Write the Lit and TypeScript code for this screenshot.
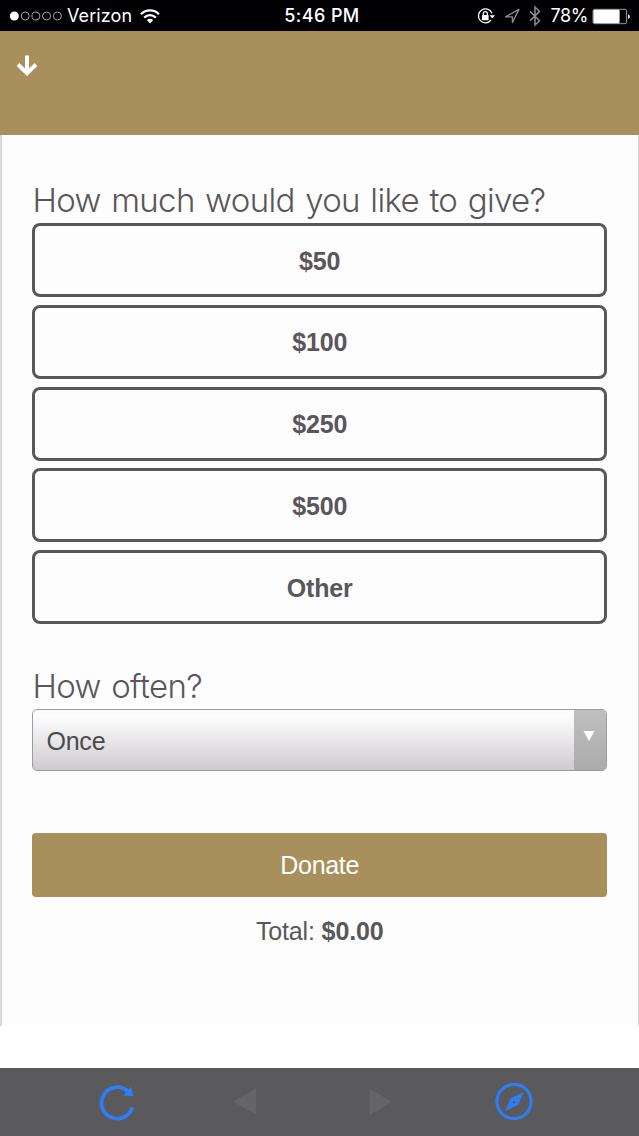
import { LitElement, html, css } from "lit";
import { customElement, state } from "lit/decorators.js";

@customElement("status-bar")
class StatusBar extends LitElement {
  static styles = css`
    :host {
      display: grid;
      grid-template-columns: 1fr auto 1fr;
      align-items: center;
      height: 31px;
      background: #010002;
      color: #fff;
      font: 400 18px/32px Inter, "Liberation Sans", sans-serif;
    }
    svg { display: block; flex: none; }
    .left { display: flex; align-items: center; padding-left: 9px; }
    .carrier { margin-left: 5px; font-size: 18px; letter-spacing: 0.1px; }
    .wifi { margin-left: 8px; }
    .time { font-weight: 500; font-size: 18px; letter-spacing: 0.4px; padding-left: 5px; }
    .right { display: flex; align-items: center; justify-content: flex-end; padding-right: 8px; }
    .pct { margin: 0 4px 0 9px; letter-spacing: -0.4px; }
  `;
  render() {
    return html`
      <div class="left">
        <svg width="53" height="12" viewBox="0 0 53 12" fill="none" stroke="#a5a5a5" stroke-width="1">
          <circle cx="5.3" cy="6" r="4.5" fill="#fff" stroke="none" />
          <circle cx="16.2" cy="6" r="4" />
          <circle cx="26.9" cy="6" r="4" />
          <circle cx="37.6" cy="6" r="4" />
          <circle cx="48.4" cy="6" r="4" />
        </svg>
        <span class="carrier">Verizon</span>
        <svg class="wifi" width="20" height="15" viewBox="0 0 20 15" fill="none" stroke="#fff" stroke-width="2.3">
          <path d="M1 5.2C6 0.2 14 0.2 19 5.2" />
          <path d="M4.2 8.6C7.5 5.4 12.5 5.4 15.8 8.6" />
          <path d="M10 14.5L6.8 11.1C8.6 9.4 11.4 9.4 13.2 11.1Z" fill="#fff" stroke="none" />
        </svg>
      </div>
      <span class="time">5:46 PM</span>
      <div class="right">
        <svg width="18" height="18" viewBox="0 0 18 18" fill="none" stroke="#fff" stroke-width="1.3">
          <path d="M14.9 6.2A7 7 0 1 0 14 13.2" />
          <path d="M12.6 8.2H18L15.3 11.6Z" fill="#fff" stroke="none" />
          <rect x="5" y="8" width="6.6" height="5.2" rx=".6" fill="#fff" stroke="none" />
          <path d="M6.3 8.4V6.7a2 2 0 0 1 4 0V8.4" />
        </svg>
        <svg width="34" height="22" viewBox="0 0 34 22" fill="none" stroke="#8d8d8d" stroke-width="1.3">
          <path d="M10.5 11.8L24 4.4L17.4 17.6V11.8Z" stroke-linejoin="round" />
        </svg>
        <svg width="12" height="22" viewBox="0 0 12 22" fill="none" stroke="#8d8d8d" stroke-width="1.5">
          <path d="M1 6.2L10.5 15.8L6 20V2L10.5 6.4L1 15.8" />
        </svg>
        <span class="pct">78%</span>
        <svg width="39" height="17" viewBox="0 0 39 17">
          <rect x="1" y="1.3" width="33.6" height="14.4" rx="1.6" fill="none" stroke="#999" />
          <rect x="1.4" y="1.8" width="26.2" height="13.4" rx="1" fill="#fff" />
          <path d="M36 6.2C38.6 7.2 38.6 9.9 36 11Z" fill="#ddd" />
        </svg>
      </div>
    `;
  }
}

@customElement("browser-toolbar")
class BrowserToolbar extends LitElement {
  static styles = css`
    :host {
      display: flex;
      align-items: center;
      height: 68px;
      box-sizing: border-box;
      padding: 0 105px 2px 98px;
      background: #5a595b;
    }
    svg { display: block; flex: none; }
    .back { margin-left: 96px; }
    .forward { margin-left: 111px; }
    .open { margin-left: auto; }
  `;
  render() {
    return html`
      <svg width="38" height="40" viewBox="0 0 38 40" fill="none" stroke="#2f7df6" stroke-width="3.8">
        <path d="M34.3 26.2A15.7 15.7 0 1 1 30 10.5" />
        <path d="M33 5.8L35.4 15.2L25.2 14.6Z" fill="#2f7df6" stroke="none" />
      </svg>
      <svg class="back" width="26" height="28" viewBox="0 0 26 28"><path d="M1 14.5L24 1.5V27.5Z" fill="#656466" /></svg>
      <svg class="forward" width="26" height="28" viewBox="0 0 26 28"><path d="M23 15L.5 1.5V28Z" fill="#656466" /></svg>
      <svg class="open" width="40" height="40" viewBox="0 0 40 40" fill="none">
        <circle cx="20" cy="20.5" r="17.1" stroke="#2f7df6" stroke-width="3.1" />
        <path fill-rule="evenodd" d="M29.8 11L24 24L11.2 30L16.6 17.2ZM20 19.8A1.3 1.3 0 1 0 20.1 22.4A1.3 1.3 0 0 0 20 19.8Z" fill="#2f7df6" />
      </svg>
    `;
  }
}

@customElement("app-root")
class AppRoot extends LitElement {
  static styles = css`
    :host {
      display: flex;
      flex-direction: column;
      width: 639px;
      height: 1136px;
      overflow: hidden;
      background: #fff;
      color: #59575a;
      font: 400 25px/30px "Liberation Sans", Arial, sans-serif;
    }
    .header { height: 104px; box-sizing: border-box; padding: 24px 0 0 16px; background: #a7905c; }
    .header svg { display: block; }
    .sheet {
      height: 891px;
      box-sizing: border-box;
      border: solid #d9d9d9;
      border-width: 0 1px 0 2px;
      padding: 44px 31px 0 30.4px;
      background: #fefdfe;
    }
    .question {
      margin: 0;
      height: 44px;
      font: 300 33px/43px Inter, "Liberation Sans", sans-serif;
      letter-spacing: -0.65px;
      word-spacing: 1.8px;
      white-space: nowrap;
    }
    .amounts { display: grid; gap: 7.8px; }
    button {
      display: block;
      width: 100%;
      margin: 0;
      padding: 0;
      color: inherit;
      font: inherit;
      box-sizing: border-box;
    }
    .amount {
      height: 74px;
      padding-top: 1px;
      border: 3px solid #59575a;
      border-radius: 8px;
      background: #fefdfe;
      font-weight: 700;
      letter-spacing: -0.15px;
    }
    .frequency { padding-top: 41px; }
    .select {
      display: flex;
      height: 62px;
      box-sizing: border-box;
      border: 1px solid #9d9c9e;
      border-radius: 5px;
      overflow: hidden;
      background: linear-gradient(#fefdfe 10%, #cdcbce);
    }
    .value { flex: 1; padding-left: 13px; line-height: 62px; color: #4c4a4d; letter-spacing: -0.2px; }
    .arrow {
      width: 32px;
      box-sizing: border-box;
      padding: 20px 0 0 9px;
      background: linear-gradient(#c0bfc0, #acabac);
    }
    .arrow svg { display: block; }
    .donate {
      height: 64px;
      margin-top: 62px;
      border: 0;
      border-radius: 4px;
      background: #a7905c;
      color: #fff;
      letter-spacing: -0.3px;
    }
    .total { margin-top: 19px; text-align: center; letter-spacing: -0.15px; }
    .spacer { flex: 1; }
  `;

  @state() private selected = 0;

  render() {
    return html`
      <status-bar></status-bar>
      <div class="header">
        <svg width="22" height="23" viewBox="0 0 22 23" fill="none" stroke="#fff" stroke-width="4">
          <path d="M11 0.5V18M2 9.5L11 18.2L20 9.5" />
        </svg>
      </div>
      <div class="sheet">
        <h1 class="question">How much would you like to give?</h1>
        <div class="amounts">
          ${["$50", "$100", "$250", "$500", "Other"].map(
            (label) => html`<button class="amount">${label}</button>`
          )}
        </div>
        <div class="frequency">
          <h1 class="question">How often?</h1>
          <div class="select">
            <span class="value">Once</span>
            <span class="arrow">
              <svg width="12" height="12" viewBox="0 0 12 12"><path d="M.5 1H11.5L6 11Z" fill="#fff" /></svg>
            </span>
          </div>
        </div>
        <button class="donate">Donate</button>
        <div class="total">Total: <b>$${this.selected.toFixed(2)}</b></div>
      </div>
      <div class="spacer"></div>
      <browser-toolbar></browser-toolbar>
    `;
  }
}
